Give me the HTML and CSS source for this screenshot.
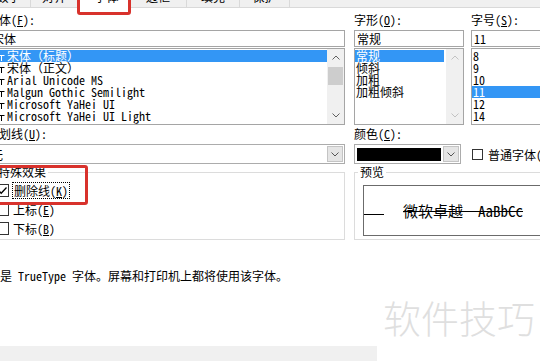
FILE: index.html
```html
<!DOCTYPE html>
<html lang="zh-CN">
<head>
    <meta charset="UTF-8">
    <meta name="viewport" content="width=device-width, initial-scale=1.0">
    <title>设置单元格格式 - 字体</title>
    <link rel="stylesheet" href="styles.css">
</head>
<body>
<div class="dialog">
    <div class="tabs">
        <div class="tab tab-num"><span>数字</span></div>
        <div class="tab tab-align"><span>对齐</span></div>
        <div class="tab tab-font active"><span>字体</span><div class="mark mark-tab"></div></div>
        <div class="tab tab-border"><span>边框</span></div>
        <div class="tab tab-fill"><span>填充</span></div>
        <div class="tab tab-protect"><span>保护</span></div>
    </div>

    <!-- font / style / size -->
    <div class="row">
        <div class="col col-face">
            <div class="label">字体(<u>F</u>):</div>
            <div class="field field-face">宋体</div>
            <div class="list list-face">
                <div class="items">
                    <div class="item selected"><svg class="tt" viewBox="0 0 11 9"><path d="M0 1.5H6M3 1.5V8M4.5 3.5H10.5M7.5 3.5V9" stroke="currentColor" fill="none"/></svg>宋体（标题）</div>
                    <div class="item"><svg class="tt" viewBox="0 0 11 9"><path d="M0 1.5H6M3 1.5V8M4.5 3.5H10.5M7.5 3.5V9" stroke="currentColor" fill="none"/></svg>宋体（正文）</div>
                    <div class="item"><svg class="tt" viewBox="0 0 11 9"><path d="M0 1.5H6M3 1.5V8M4.5 3.5H10.5M7.5 3.5V9" stroke="currentColor" fill="none"/></svg>Arial Unicode MS</div>
                    <div class="item"><svg class="tt" viewBox="0 0 11 9"><path d="M0 1.5H6M3 1.5V8M4.5 3.5H10.5M7.5 3.5V9" stroke="currentColor" fill="none"/></svg>Malgun Gothic Semilight</div>
                    <div class="item"><svg class="tt" viewBox="0 0 11 9"><path d="M0 1.5H6M3 1.5V8M4.5 3.5H10.5M7.5 3.5V9" stroke="currentColor" fill="none"/></svg>Microsoft YaHei UI</div>
                    <div class="item"><svg class="tt" viewBox="0 0 11 9"><path d="M0 1.5H6M3 1.5V8M4.5 3.5H10.5M7.5 3.5V9" stroke="currentColor" fill="none"/></svg>Microsoft YaHei UI Light</div>
                </div>
                <div class="scrollbar">
                    <div class="arrow"><svg viewBox="0 0 8 5"><path d="M0.5 4.5L4 1L7.5 4.5" stroke="currentColor" fill="none"/></svg></div>
                    <div class="track"><div class="thumb"></div></div>
                    <div class="arrow"><svg viewBox="0 0 8 5"><path d="M0.5 0.5L4 4L7.5 0.5" stroke="currentColor" fill="none"/></svg></div>
                </div>
            </div>
        </div>
        <div class="col col-style">
            <div class="label">字形(<u>O</u>):</div>
            <div class="field">常规</div>
            <div class="list">
                <div class="items items-style">
                    <div class="item selected">常规</div>
                    <div class="item">倾斜</div>
                    <div class="item">加粗</div>
                    <div class="item">加粗倾斜</div>
                </div>
                <div class="scrollbar disabled">
                    <div class="arrow"><svg viewBox="0 0 8 5"><path d="M0.5 4.5L4 1L7.5 4.5" stroke="currentColor" fill="none"/></svg></div>
                    <div class="track"></div>
                    <div class="arrow"><svg viewBox="0 0 8 5"><path d="M0.5 0.5L4 4L7.5 0.5" stroke="currentColor" fill="none"/></svg></div>
                </div>
            </div>
        </div>
        <div class="col col-size">
            <div class="label">字号(<u>S</u>):</div>
            <div class="field">11</div>
            <div class="list">
                <div class="items">
                    <div class="item">8</div>
                    <div class="item">9</div>
                    <div class="item">10</div>
                    <div class="item selected">11</div>
                    <div class="item">12</div>
                    <div class="item">14</div>
                </div>
            </div>
        </div>
    </div>

    <!-- underline / colour -->
    <div class="row">
        <div class="col col-face">
            <div class="label">下划线(<u>U</u>):</div>
            <div class="combo">
                <span class="combo-text">无</span>
                <div class="combo-btn"><svg viewBox="0 0 8 5"><path d="M0.5 0.5L4 4L7.5 0.5" stroke="currentColor" fill="none"/></svg></div>
            </div>
        </div>
        <div class="col col-style">
            <div class="label">颜色(<u>C</u>):</div>
            <div class="combo combo-color">
                <span class="swatch"></span>
                <div class="combo-btn"><svg viewBox="0 0 8 5"><path d="M0.5 0.5L4 4L7.5 0.5" stroke="currentColor" fill="none"/></svg></div>
            </div>
        </div>
        <div class="col col-normal">
            <label class="check normal"><span class="box"></span>普通字体(<u>N</u>)</label>
        </div>
    </div>

    <!-- effects / preview -->
    <div class="row groups">
        <fieldset class="group effects">
            <legend>特殊效果</legend>
            <div class="mark mark-effects"></div>
            <label class="check"><span class="box checked"><svg viewBox="0 0 11 11"><path d="M1.5 5.5L4.2 8.2L9.5 2.5" stroke="#000" stroke-width="1.3" fill="none"/></svg></span><span class="focus">删除线(<u>K</u>)</span></label>
            <label class="check"><span class="box"></span>上标(<u>E</u>)</label>
            <label class="check"><span class="box"></span>下标(<u>B</u>)</label>
        </fieldset>
        <fieldset class="group preview">
            <legend>预览</legend>
            <div class="preview-box">
                <div class="baseline"></div>
                <div class="sample">微软卓越&nbsp;&nbsp;AaBbCc</div>
            </div>
        </fieldset>
    </div>

    <div class="note">这是 TrueType 字体。屏幕和打印机上都将使用该字体。</div>

    <div class="watermark">软件技巧</div>
    <div class="footer"></div>
</div>
</body>
</html>
```

FILE: styles.css
```css
* {
    box-sizing: border-box;
}
body {
    margin: 0;
    width: 540px;
    height: 361px;
    overflow: hidden;
    background: #fff;
    color: #000;
    font-family: "Noto Sans Mono CJK SC", "Liberation Mono", "Noto Sans CJK SC", monospace;
    font-size: 12px;
}
u {
    text-decoration: underline;
}
.dialog {
    position: relative;
    width: 620px;
    margin-left: -13px;
}
.mark {
    position: absolute;
    border: 3px solid #d8322c;
    border-radius: 3px;
}

/* tabs */
.tabs {
    display: flex;
    height: 8px;
    background: #f0f0f0;
    border-bottom: 1px solid #d9d9d9;
}
.tab {
    position: relative;
    height: 7px;
    display: flex;
    align-items: flex-end;
    justify-content: center;
    border-right: 1px solid #d9d9d9;
    color: #000;
}
.tab span {
    line-height: 16px;
    margin-bottom: 2px;
    white-space: nowrap;
}
.tab-num { width: 44px; }
.tab-align { width: 47px; }
.tab-font { width: 52px; }
.tab-border { width: 57px; }
.tab-fill { width: 53px; }
.tab-protect { width: 50px; }
.tab.active {
    height: 8px;
    background: #fff;
}
.tab.active span {
    margin-bottom: 3px;
    padding-left: 6px;
}
.mark-tab {
    left: -1px;
    top: -6px;
    width: 54px;
    height: 21px;
}

/* columns */
.row {
    display: flex;
}
.col-face { width: 358px; }
.col-style { width: 110px; margin-left: 9px; }
.col-size { width: 100px; margin-left: 7px; }
.col-normal { margin-left: 8px; padding-top: 20px; }
.label {
    line-height: 16px;
    margin-top: 4px;
    white-space: nowrap;
}
.row + .row .label {
    margin-top: 1px;
}
.field {
    height: 17px;
    margin-top: 2px;
    border: 1px solid #a5a5a5;
    padding: 0 2px;
    line-height: 15px;
}
.field-face {
    padding-left: 4px;
}
.list {
    display: flex;
    height: 77px;
    margin-top: 1px;
    border: 1px solid #a5a5a5;
    overflow: hidden;
}
.items {
    flex: 1;
    padding-top: 1px;
}
.items-style {
    padding-right: 2px;
}
.item {
    display: flex;
    align-items: center;
    height: 12px;
    line-height: 12px;
    padding-left: 1px;
    white-space: nowrap;
}
.item.selected {
    background: #3396f5;
    color: #fff;
}
.list-face .item {
    padding-left: 6px;
}
.tt {
    width: 11px;
    height: 9px;
    margin-right: 2px;
    flex: none;
}

/* scrollbars */
.scrollbar {
    width: 17px;
    display: flex;
    flex-direction: column;
    background: #f0f0f0;
    color: #606060;
}
.scrollbar.disabled {
    color: #c2c2c2;
}
.arrow {
    height: 17px;
    display: flex;
    align-items: center;
    justify-content: center;
}
.arrow svg,
.combo-btn svg {
    width: 8px;
    height: 5px;
}
.track {
    flex: 1;
}
.thumb {
    height: 18px;
    margin: 1px 1px 0;
    background: #cdcdcd;
}

/* combos */
.combo {
    display: flex;
    align-items: center;
    height: 20px;
    margin-top: 2px;
    border: 1px solid #acacac;
    padding: 1px;
}
.combo-text {
    flex: 1;
    padding-left: 2px;
}
.combo-btn {
    width: 16px;
    height: 16px;
    margin-left: auto;
    display: flex;
    align-items: center;
    justify-content: center;
    background: #e5e5e5;
    border: 1px solid #c4c4c4;
    color: #555;
}
.combo-color {
    width: 107px;
}
.swatch {
    width: 84px;
    height: 13px;
    margin-left: 1px;
    background: #000;
}

/* checkboxes */
.check {
    display: flex;
    align-items: center;
    height: 19px;
    white-space: nowrap;
}
.box {
    width: 13px;
    height: 13px;
    margin-right: 4px;
    border: 1px solid #333;
    background: #fff;
    flex: none;
}
.box svg {
    display: block;
    width: 11px;
    height: 11px;
}
.normal .box {
    width: 11px;
    height: 11px;
    margin-right: 5px;
}
.focus {
    outline: 1px dotted #000;
    padding: 1px 1px 0;
    line-height: 14px;
}

/* groups */
.groups {
    margin-top: 2px;
}
.group {
    position: relative;
    margin: 0;
    height: 74px;
    border: 1px solid #dcdcdc;
    padding: 3px 0 0 8px;
}
.group legend {
    padding: 0 2px;
    line-height: 12px;
}
.effects {
    width: 358px;
}
.mark-effects {
    left: 7px;
    top: -13px;
    width: 93px;
    height: 40px;
}
.preview {
    width: 220px;
    margin-left: 9px;
    padding: 0 0 0 3px;
}
.preview-box {
    display: flex;
    align-items: center;
    height: 51px;
    margin: 7px 0 0 5px;
    border: 1px solid #6b6b6b;
}
.baseline {
    align-self: flex-start;
    width: 20px;
    height: 1px;
    margin-top: 28px;
    background: #000;
}
.sample {
    margin-left: 19px;
    font-size: 15px;
    line-height: 20px;
    text-decoration: line-through;
    white-space: nowrap;
}

/* bottom */
.note {
    margin-top: 28px;
    padding-left: 1px;
    line-height: 16px;
    white-space: nowrap;
}
.watermark {
    margin-top: 13px;
    padding-left: 396px;
    font-family: "Noto Sans CJK SC", sans-serif;
    font-weight: 300;
    font-size: 38px;
    line-height: 40px;
    color: #dfdfdf;
    white-space: nowrap;
}
.footer {
    width: 390px;
    height: 16px;
    margin-top: 9px;
    background: #f0f0f0;
}
```
